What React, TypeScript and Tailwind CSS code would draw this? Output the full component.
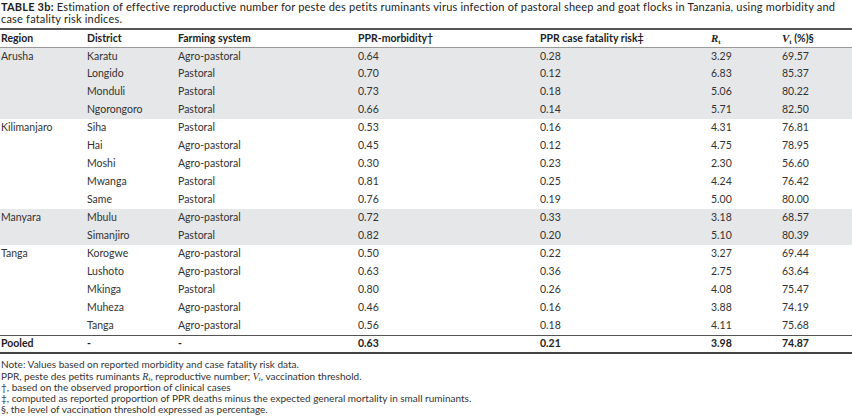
const rows: { region: string; district: string; farming: string; morb: string; cfr: string; rt: string; vt: string; shaded: boolean }[] = [
  { region: 'Arusha', district: 'Karatu', farming: 'Agro-pastoral', morb: '0.64', cfr: '0.28', rt: '3.29', vt: '69.57', shaded: true },
  { region: '', district: 'Longido', farming: 'Pastoral', morb: '0.70', cfr: '0.12', rt: '6.83', vt: '85.37', shaded: true },
  { region: '', district: 'Monduli', farming: 'Pastoral', morb: '0.73', cfr: '0.18', rt: '5.06', vt: '80.22', shaded: true },
  { region: '', district: 'Ngorongoro', farming: 'Pastoral', morb: '0.66', cfr: '0.14', rt: '5.71', vt: '82.50', shaded: true },
  { region: 'Kilimanjaro', district: 'Siha', farming: 'Pastoral', morb: '0.53', cfr: '0.16', rt: '4.31', vt: '76.81', shaded: false },
  { region: '', district: 'Hai', farming: 'Agro-pastoral', morb: '0.45', cfr: '0.12', rt: '4.75', vt: '78.95', shaded: false },
  { region: '', district: 'Moshi', farming: 'Agro-pastoral', morb: '0.30', cfr: '0.23', rt: '2.30', vt: '56.60', shaded: false },
  { region: '', district: 'Mwanga', farming: 'Pastoral', morb: '0.81', cfr: '0.25', rt: '4.24', vt: '76.42', shaded: false },
  { region: '', district: 'Same', farming: 'Pastoral', morb: '0.76', cfr: '0.19', rt: '5.00', vt: '80.00', shaded: false },
  { region: 'Manyara', district: 'Mbulu', farming: 'Agro-pastoral', morb: '0.72', cfr: '0.33', rt: '3.18', vt: '68.57', shaded: true },
  { region: '', district: 'Simanjiro', farming: 'Pastoral', morb: '0.82', cfr: '0.20', rt: '5.10', vt: '80.39', shaded: true },
  { region: 'Tanga', district: 'Korogwe', farming: 'Agro-pastoral', morb: '0.50', cfr: '0.22', rt: '3.27', vt: '69.44', shaded: false },
  { region: '', district: 'Lushoto', farming: 'Agro-pastoral', morb: '0.63', cfr: '0.36', rt: '2.75', vt: '63.64', shaded: false },
  { region: '', district: 'Mkinga', farming: 'Pastoral', morb: '0.80', cfr: '0.26', rt: '4.08', vt: '75.47', shaded: false },
  { region: '', district: 'Muheza', farming: 'Agro-pastoral', morb: '0.46', cfr: '0.16', rt: '3.88', vt: '74.19', shaded: false },
  { region: '', district: 'Tanga', farming: 'Agro-pastoral', morb: '0.56', cfr: '0.18', rt: '4.11', vt: '75.68', shaded: false },
];

// italic serif symbol with a subscript t
function Sym({ s }: { s: string }) {
  return (
    <span className="font-['Liberation_Serif',serif] italic text-[11px]">
      {s}
      <sub className="text-[7px] not-italic leading-none">t</sub>
    </span>
  );
}

export default function App() {
  return (
    <div className="w-[852px] h-[419px] bg-white overflow-hidden font-['Lato',sans-serif] text-[#333]">
      {/* Caption */}
      <p className="text-[11px] leading-[12px] tracking-[0.2px] text-[#222] pt-[1px] pl-[1px] pr-[2px]">
        <span className="font-bold">TABLE 3b:</span> Estimation of effective reproductive number for peste des petits ruminants virus infection of pastoral sheep and goat flocks in Tanzania, using morbidity and case fatality risk indices.
      </p>

      <table className="mt-[3px] w-[852px] table-fixed border-collapse text-[10.5px]">
        <colgroup>
          <col className="w-[87px]" />
          <col className="w-[91px]" />
          <col className="w-[180px]" />
          <col className="w-[182px]" />
          <col className="w-[171px]" />
          <col className="w-[71px]" />
          <col className="w-[70px]" />
        </colgroup>
        <thead>
          <tr className="h-[18px] border-t-2 border-t-[#555] border-b border-b-[#999] font-bold text-[#222]">
            <td className="pl-[1px]">Region</td>
            <td>District</td>
            <td>Farming system</td>
            <td>PPR-morbidity†</td>
            <td>PPR case fatality risk‡</td>
            <td><Sym s="R" /></td>
            <td><Sym s="V" /> (%)§</td>
          </tr>
        </thead>
        <tbody>
          {rows.map((r, i) => (
            <tr key={i} className={`h-[18px] ${r.shaded ? 'bg-[#e6e7e8]' : 'bg-white'}`}>
              <td className="pl-[1px]">{r.region}</td>
              <td>{r.district}</td>
              <td>{r.farming}</td>
              <td>{r.morb}</td>
              <td>{r.cfr}</td>
              <td>{r.rt}</td>
              <td>{r.vt}</td>
            </tr>
          ))}
          <tr className="h-[18px] border-t border-t-[#555] border-b-2 border-b-[#444] font-bold text-[#222]">
            <td className="pl-[1px]">Pooled</td>
            <td>-</td>
            <td>-</td>
            <td>0.63</td>
            <td>0.21</td>
            <td>3.98</td>
            <td>74.87</td>
          </tr>
        </tbody>
      </table>

      {/* Notes */}
      <div className="mt-[5px] pl-[1px] text-[10px] leading-[11.3px] text-[#333]">
        <p>Note: Values based on reported morbidity and case fatality risk data.</p>
        <p>
          PPR, peste des petits ruminants <span className="font-['Liberation_Serif',serif] italic">R<sub className="text-[7px] leading-none">t</sub></span>, reproductive number; <span className="font-['Liberation_Serif',serif] italic">V<sub className="text-[7px] leading-none">t</sub></span>, vaccination threshold.
        </p>
        <p>†, based on the observed proportion of clinical cases</p>
        <p>‡, computed as reported proportion of PPR deaths minus the expected general mortality in small ruminants.</p>
        <p>§, the level of vaccination threshold expressed as percentage.</p>
      </div>
    </div>
  );
}
